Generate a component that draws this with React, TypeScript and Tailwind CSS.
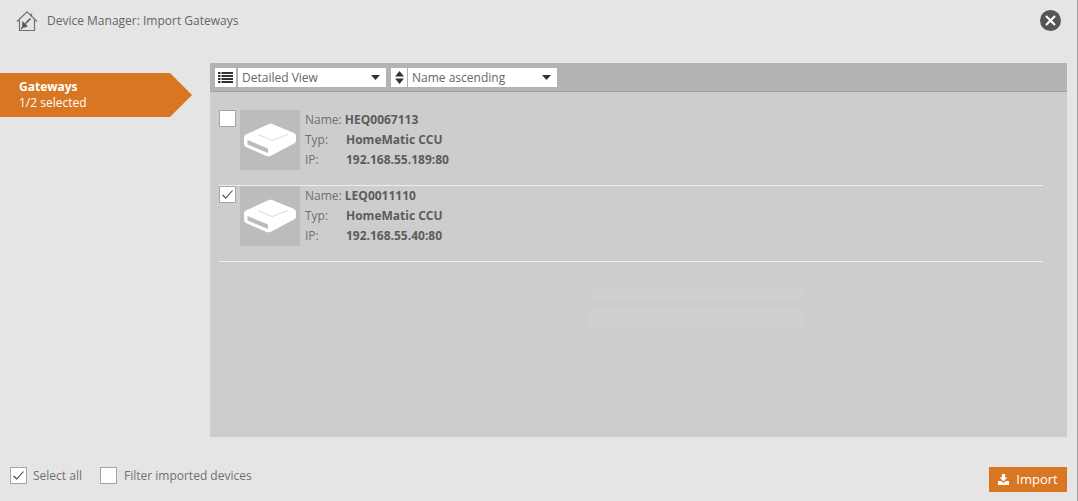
import React from 'react';

function HomeIcon() {
  return (
    <svg width="22" height="22" viewBox="0 0 22 22" fill="none">
      <path d="M1 11.5 L11 1.8 L21 11.5" stroke="#6f6f6f" strokeWidth="1.2" />
      <path d="M3.5 10 V20.5 H18.5 V10" stroke="#6f6f6f" strokeWidth="1.2" />
      <path d="M15.5 3.5 V6.5" stroke="#6f6f6f" strokeWidth="1.2" />
      <path d="M14.5 8.5 L9.5 13.5" stroke="#555" strokeWidth="1.6" />
      <path d="M6.5 11 L11.8 16.3 L9 17.5 L6 17.5 Z" fill="#555" />
      <path d="M5 19 L7 17" stroke="#555" strokeWidth="1.2" />
    </svg>
  );
}

function CloseIcon() {
  return (
    <svg width="21" height="21" viewBox="0 0 21 21">
      <circle cx="10.5" cy="10.5" r="10.5" fill="#555555" />
      <path d="M6 6 L15 15 M15 6 L6 15" stroke="#ffffff" strokeWidth="2.2" />
    </svg>
  );
}

function DeviceIcon() {
  return (
    <svg width="52" height="34" viewBox="0 0 52 34">
      <path
        d="M25 1 C26 0.6 27 0.6 28 1 L49 9.5 C51 10.3 52 11.5 52 13 V17.5 C52 19 51 20.2 49.5 20.8 L27 32.8 C25.5 33.5 24 33.5 22.5 33 L3 24.5 C1 23.6 0 22.3 0 20.5 V15 C0 13 1 11.8 3 11 Z"
        fill="#ffffff"
      />
      <path d="M3.5 17 L24 25.5 V30 L3.5 21.5 Z" fill="#bcbcbc" />
      <path d="M14 11.5 L28 17.5 L44 11.5" fill="none" stroke="#cfcfcf" strokeWidth="0.8" />
    </svg>
  );
}

function ListIcon() {
  return (
    <svg width="15" height="11" viewBox="0 0 15 11" fill="#333333">
      <rect x="0" y="0" width="2.5" height="2" />
      <rect x="3.5" y="0" width="11.5" height="2" />
      <rect x="0" y="3" width="2.5" height="2" />
      <rect x="3.5" y="3" width="11.5" height="2" />
      <rect x="0" y="6" width="2.5" height="2" />
      <rect x="3.5" y="6" width="11.5" height="2" />
      <rect x="0" y="9" width="2.5" height="2" />
      <rect x="3.5" y="9" width="11.5" height="2" />
    </svg>
  );
}

function SortIcon() {
  return (
    <svg width="9" height="13" viewBox="0 0 9 13" fill="#333333">
      <path d="M4.5 0 L9 5.5 H0 Z" />
      <path d="M0 7.5 H9 L4.5 13 Z" />
    </svg>
  );
}

function Caret() {
  return (
    <svg width="9" height="5" viewBox="0 0 9 5" fill="#333333">
      <path d="M0 0 H9 L4.5 5 Z" />
    </svg>
  );
}

function DownloadIcon() {
  return (
    <svg width="11" height="11" viewBox="0 0 11 11" fill="#ffffff">
      <path d="M3.8 0 H7.2 V3.5 H9.3 L5.5 7.4 L1.7 3.5 H3.8 Z" />
      <path d="M0 7 H3 L5.5 9 L8 7 H11 V11 H0 Z" />
    </svg>
  );
}

function Checkbox({ checked }: { checked?: boolean }) {
  return (
    <div className="w-[17px] h-[17px] shrink-0 bg-white border border-[#a5a5a5] flex items-center justify-center">
      {checked && (
        <svg width="13" height="11" viewBox="0 0 13 11" fill="none">
          <path d="M1.5 6 L4.8 9 L11.5 1.5" stroke="#444444" strokeWidth="1.1" />
        </svg>
      )}
    </div>
  );
}

function SelectBox({ label, width }: { label: string; width: string }) {
  return (
    <div className={`${width} h-[19px] bg-white flex items-center justify-between pl-[4px] pr-[6px]`}>
      <span className="text-[12px] leading-none text-[#666666]">{label}</span>
      <Caret />
    </div>
  );
}

const gateways = [
  { name: 'HEQ0067113', ip: '192.168.55.189:80', checked: false },
  { name: 'LEQ0011110', ip: '192.168.55.40:80', checked: true },
];

function GatewayRow({ name, ip, checked }: { name: string; ip: string; checked: boolean }) {
  return (
    <div className="h-[76px] w-[824px] border-b border-[#eeeeee] flex">
      <Checkbox checked={checked} />
      <div className="w-[60px] h-[60px] ml-[4px] bg-[#bcbcbc] flex items-center justify-center">
        <DeviceIcon />
      </div>
      <div className="ml-[5px] text-[12px] leading-[20px] text-[#707070]">
        <div>
          Name: <span className="font-bold text-[#5c5c5c]">{name}</span>
        </div>
        <div className="flex">
          <span className="w-[41px]">Typ:</span>
          <span className="font-bold text-[#5c5c5c]">HomeMatic CCU</span>
        </div>
        <div className="flex">
          <span className="w-[41px]">IP:</span>
          <span className="font-bold text-[#5c5c5c]">{ip}</span>
        </div>
      </div>
    </div>
  );
}

export default function App() {
  return (
    <div className="w-[1078px] h-[501px] overflow-hidden bg-[#e5e5e5] border-r border-[#a8a8a8] flex flex-col font-['Open_Sans',sans-serif]">
      <div className="h-[63px] shrink-0 flex pl-[16px] pr-[16px] pt-[10px] items-start justify-between">
        <div className="flex items-center h-[21px] gap-[9px]">
          <HomeIcon />
          <span className="text-[12px] leading-none text-[#666666]">Device Manager: Import Gateways</span>
        </div>
        <CloseIcon />
      </div>

      <div className="flex h-[374px] shrink-0">
        <div className="w-[210px] shrink-0 pt-[10px]">
          <div className="flex h-[44px] w-[192px]">
            <div className="w-[170px] bg-[#d97621] pl-[19px] pt-[6px] text-[12px] leading-[16px] text-white">
              <div className="font-bold">Gateways</div>
              <div>1/2 selected</div>
            </div>
            <div className="w-0 h-0 border-y-[22px] border-y-transparent border-l-[22px] border-l-[#d97621]" />
          </div>
        </div>

        <div className="w-[857px] shrink-0 bg-[#cdcdcd] flex flex-col">
          <div className="h-[29px] shrink-0 bg-[#b3b3b3] border-b border-[#9f9f9f] flex items-start pt-[5px] pl-[5px]">
            <div className="w-[21px] h-[19px] bg-white flex items-center justify-center">
              <ListIcon />
            </div>
            <div className="w-[2px]" />
            <SelectBox label="Detailed View" width="w-[148px]" />
            <div className="w-[5px]" />
            <div className="w-[16px] h-[19px] bg-white flex items-center justify-center">
              <SortIcon />
            </div>
            <div className="w-[1px]" />
            <SelectBox label="Name ascending" width="w-[149px]" />
          </div>
          <div className="relative flex-1 pt-[18px] pl-[9px]">
            {gateways.map((g) => (
              <GatewayRow key={g.name} {...g} />
            ))}
            <div className="absolute left-[380px] top-[196px] w-[213px] h-[11px] bg-[#cfcfcf]" />
            <div className="absolute left-[378px] top-[217px] w-[217px] h-[21px] bg-[#cfcfcf]" />
          </div>
        </div>
      </div>

      <div className="flex-1 flex items-start justify-between pl-[10px] pr-[10px] pt-[30px]">
        <div className="flex items-center h-[17px] text-[12px] leading-none text-[#707070]">
          <Checkbox checked />
          <span className="ml-[6px]">Select all</span>
          <div className="w-[18px]" />
          <Checkbox />
          <span className="ml-[7px]">Filter imported devices</span>
        </div>
        <div className="w-[78px] h-[25px] bg-[#d97621] flex items-center justify-center gap-[7px] text-[13px] leading-none text-white">
          <DownloadIcon />
          <span>Import</span>
        </div>
      </div>
    </div>
  );
}
